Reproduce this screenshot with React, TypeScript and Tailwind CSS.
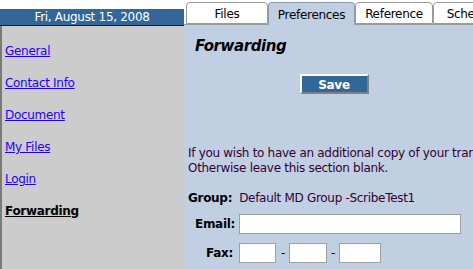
import React from "react";

const links = ["General", "Contact Info", "Document", "My Files", "Login"];

function Tab({ label, active }: { label: string; active?: boolean }) {
  return (
    <div
      className={
        active
          ? "flex h-[23px] w-full items-start justify-center rounded-t-[4px] border border-b-0 border-[#8a9bb0] bg-[#c0d0e2] pt-[3px] text-[12px] text-black"
          : "mt-[1px] flex h-[22px] w-full items-start justify-center rounded-t-[4px] border border-[#9a9a9a] bg-white pt-[2px] text-[12px] text-black"
      }
    >
      {label}
    </div>
  );
}

export default function App() {
  return (
    <div
      className="flex h-[269px] w-[473px] overflow-hidden bg-[#c0d0e2] tracking-[-0.3px]"
      style={{ fontFamily: "Tahoma, 'DejaVu Sans', Verdana, sans-serif" }}
    >
      {/* left column */}
      <div className="flex w-[184px] shrink-0 flex-col">
        <div className="h-[9px] bg-white" />
        <div className="flex h-[16px] items-center justify-center bg-[#336699] text-[12px] text-white">
          Fri, August 15, 2008
        </div>
        <div className="h-[1px] bg-[#1a1a1a]" />
        <div className="flex flex-1 flex-col gap-[17px] border-l-2 border-[#7a7a7a] bg-[#cccccc] pl-[3px] pt-[18px] text-[12px]">
          {links.map(l => (
            <a key={l} href="#" className="leading-[15px] text-[#2200ff] underline">
              {l}
            </a>
          ))}
          <a href="#" className="font-bold leading-[15px] text-black underline">
            Forwarding
          </a>
        </div>
      </div>

      {/* right column */}
      <div className="flex min-w-0 flex-1 flex-col">
        <div className="flex h-[25px] items-end border-b border-[#9a9a9a] bg-white pl-[2px]">
          <div className="w-[82px] shrink-0"><Tab label="Files" /></div>
          <div className="relative top-[1px] w-[87px] shrink-0"><Tab label="Preferences" active /></div>
          <div className="w-[78px] shrink-0"><Tab label="Reference" /></div>
          <div className="w-[80px] shrink-0"><Tab label="Schedule" /></div>
        </div>
        <div className="flex flex-col pl-[11px] pt-[12px] text-[12px]">
          <h1 className="text-[15px] font-bold italic leading-[18px] tracking-[-0.4px] text-black">Forwarding</h1>
          <div className="mt-[19px] flex justify-center">
            <button className="h-[20px] w-[69px] border-2 border-t-white border-l-white border-b-[#808080] border-r-[#808080] bg-[#336699] text-[12px] font-bold text-white">
              Save
            </button>
          </div>
          <div className="-ml-[7px] mt-[52px] whitespace-nowrap leading-[15px] text-[#330033]">
            <p>If you wish to have an additional copy of your transcriptions forwarded, enter it here.</p>
            <p>Otherwise leave this section blank.</p>
          </div>
          <div className="-ml-[7px] mt-[15px] flex items-center leading-[15px]">
            <span className="font-bold text-black">Group:</span>
            <span className="ml-[7px] text-[#330033]">Default MD Group -ScribeTest1</span>
          </div>
          <div className="mt-[8px] flex items-center">
            <span className="w-[38px] text-right font-bold text-black">Email:</span>
            <input className="ml-[6px] h-[20px] w-[222px] border border-[#a0a0a0] bg-white" />
          </div>
          <div className="mt-[9px] flex items-center">
            <span className="w-[38px] text-right font-bold text-black">Fax:</span>
            <input className="ml-[6px] h-[20px] w-[37px] border border-[#a0a0a0] bg-white" />
            <span className="ml-[5px] mr-[4px] text-black">-</span>
            <input className="h-[20px] w-[38px] border border-[#a0a0a0] bg-white" />
            <span className="mx-[4px] text-black">-</span>
            <input className="h-[20px] w-[42px] border border-[#a0a0a0] bg-white" />
          </div>
        </div>
      </div>
    </div>
  );
}
